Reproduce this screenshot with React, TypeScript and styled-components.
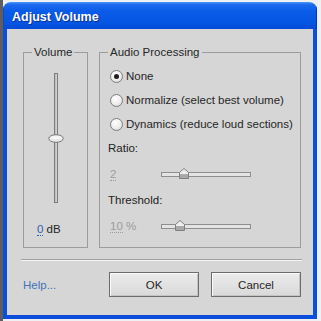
import React from "react";
import styled, { createGlobalStyle } from "styled-components";

const GlobalStyle = createGlobalStyle`
  html, body {
    margin: 0;
    padding: 0;
  }
  body {
    width: 321px;
    height: 321px;
    overflow: hidden;
    background: linear-gradient(to right, #5e5e5e 0 3px, #eef0f2 3px);
    font-family: "Liberation Sans", Arial, sans-serif;
    color: #262626;
  }
`;

const Page = styled.div`
  padding: 2px 0 0 3px;
`;

const Window = styled.div`
  width: 314px;
  height: 317px;
  display: flex;
  flex-direction: column;
  border-radius: 8px 8px 0 0;
  overflow: hidden;
`;

const TitleBar = styled.div`
  height: 27px;
  flex: none;
  box-sizing: border-box;
  padding: 3px 0 0 9px;
  display: flex;
  align-items: center;
  background: linear-gradient(
    to bottom,
    #4a95f7 0%,
    #1c69ef 10%,
    #0a5be8 35%,
    #0656e4 75%,
    #044bd6 100%
  );
  box-shadow: inset 1px 0 0 #1747c9, inset -1px 0 0 #0a34b8;
`;

const Title = styled.span`
  font-size: 12.5px;
  font-weight: bold;
  color: #fff;
  text-shadow: 1px 1px 0 #0b2f96;
`;

const Client = styled.div`
  flex: 1;
  box-sizing: border-box;
  background: #d6d6d6;
  border: 4px solid #0c4ddc;
  border-top: none;
  padding: 16px 12px 18px 16px;
  display: flex;
  flex-direction: column;
`;

const Groups = styled.div`
  display: flex;
  gap: 11px;
`;

const Group = styled.fieldset<{ $width: number }>`
  flex: none;
  width: ${(p) => p.$width}px;
  box-sizing: border-box;
  margin: 0;
  padding: 0;
  min-width: 0;
  border: 1px solid #9c9c9c;
  display: flex;
  flex-direction: column;
`;

const Legend = styled.legend`
  margin-left: 8px;
  padding: 0 2px;
  font-size: 11.5px;
  line-height: 14px;
  color: #262626;
`;

const VolumeBody = styled.div`
  padding-top: 14px;
  display: flex;
  flex-direction: column;
`;

const VTrackArea = styled.div`
  position: relative;
  width: 16px;
  height: 130px;
  margin: 0 auto;
  display: flex;
  justify-content: center;
`;

const VTrack = styled.div`
  width: 4px;
  height: 100%;
  box-sizing: border-box;
  border: 1px solid #7c7c7c;
  background: linear-gradient(to right, #b8b8b8, #d8d8d8);
`;

const VThumb = styled.svg<{ $top: number }>`
  position: absolute;
  left: 0;
  top: ${(p) => p.$top}px;
`;

const DbRow = styled.div`
  margin-top: 19px;
  padding-left: 13px;
  font-size: 11.5px;
  line-height: 14px;
`;

const Editable = styled.span<{ $disabled?: boolean }>`
  color: ${(p) => (p.$disabled ? "#9c9c9c" : "#2c62b4")};
  border-bottom: 1px dotted ${(p) => (p.$disabled ? "#9c9c9c" : "#2c62b4")};
`;

const Unit = styled.span<{ $disabled?: boolean }>`
  color: ${(p) => (p.$disabled ? "#9c9c9c" : "#262626")};
`;

const Options = styled.div`
  padding: 5px 0 0 10px;
`;

const RadioRow = styled.label`
  height: 24px;
  display: flex;
  align-items: center;
  gap: 3px;
  font-size: 11.5px;
`;

const RadioDot = styled.span<{ $checked?: boolean }>`
  position: relative;
  width: 13px;
  height: 13px;
  box-sizing: border-box;
  border-radius: 50%;
  border: 1px solid #7f7f7f;
  background: radial-gradient(circle at 40% 35%, #ffffff 0%, #ececec 55%, #cfcfcf 100%);

  &::after {
    content: "";
    display: ${(p) => (p.$checked ? "block" : "none")};
    position: absolute;
    left: 3px;
    top: 3px;
    width: 5px;
    height: 5px;
    border-radius: 50%;
    background: #1f1f1f;
  }
`;

const Params = styled.div`
  padding: 0 0 7px 8px;
`;

const ParamLabel = styled.div`
  height: 24px;
  display: flex;
  align-items: center;
  font-size: 11.5px;
  color: #222;
`;

const SliderRow = styled.div`
  height: 28px;
  display: flex;
  align-items: center;
  font-size: 11.5px;
`;

const ValueBox = styled.div`
  width: 53px;
  padding-left: 2px;
  box-sizing: border-box;
  line-height: 13px;
`;

const HTrack = styled.div`
  position: relative;
  width: 90px;
  height: 5px;
  box-sizing: border-box;
  border: 1px solid #8e8e8e;
  background: #e4e4e4;
`;

const HThumb = styled.svg<{ $left: number }>`
  position: absolute;
  top: -5px;
  left: ${(p) => p.$left}px;
`;

const Separator = styled.div`
  margin: 11px -1px 0 -2px;
  border-top: 1px solid #a2a2a2;
  border-bottom: 1px solid #f4f4f4;
`;

const Footer = styled.div`
  margin-top: 11px;
  display: flex;
  align-items: center;
`;

const HelpLink = styled.a`
  font-size: 11.5px;
  color: #3f74b6;
  text-decoration: none;
`;

const Buttons = styled.div`
  margin-left: auto;
  display: flex;
  gap: 12px;
`;

const Button = styled.button`
  width: 90px;
  height: 25px;
  box-sizing: border-box;
  border: 1px solid #6c6c6c;
  background: linear-gradient(to bottom, #ececec, #d9d9d9);
  box-shadow: inset 1px 1px 0 #fafafa, inset -1px -1px 0 #c4c4c4;
  font-family: "Liberation Sans", Arial, sans-serif;
  font-size: 11.5px;
  color: #262626;
  padding: 0;
`;

const VolumeThumb: React.FC<{ top: number }> = ({ top }) => (
  <VThumb $top={top} width="16" height="9" viewBox="0 0 16 9">
    <ellipse cx="8" cy="4.5" rx="7.3" ry="3.8" fill="#e9e9e9" stroke="#7a7a7a" />
    <ellipse cx="8" cy="3.6" rx="5" ry="1.6" fill="#f8f8f8" />
  </VThumb>
);

const SlideThumb: React.FC<{ left: number }> = ({ left }) => (
  <HThumb $left={left} width="10" height="11" viewBox="0 0 10 11">
    <path d="M0.5 10.5 V4.5 L5 0.5 L9.5 4.5 V10.5 Z" fill="#eeeeee" stroke="#7f7f7f" />
    <rect x="1" y="6" width="8" height="4" fill="#a9a9a9" />
  </HThumb>
);

const options = [
  { label: "None", checked: true },
  { label: "Normalize (select best volume)" },
  { label: "Dynamics (reduce loud sections)" },
];

const params = [
  { label: "Ratio:", value: "2", unit: "", thumb: 17 },
  { label: "Threshold:", value: "10", unit: " %", thumb: 13 },
];

export default function App() {
  return (
    <>
      <GlobalStyle />
      <Page>
        <Window>
          <TitleBar>
            <Title>Adjust Volume</Title>
          </TitleBar>
          <Client>
            <Groups>
              <Group $width={65}>
                <Legend>Volume</Legend>
                <VolumeBody>
                  <VTrackArea>
                    <VTrack />
                    <VolumeThumb top={61} />
                  </VTrackArea>
                  <DbRow>
                    <Editable>0</Editable> dB
                  </DbRow>
                </VolumeBody>
              </Group>
              <Group $width={202}>
                <Legend>Audio Processing</Legend>
                <Options>
                  {options.map((o) => (
                    <RadioRow key={o.label}>
                      <RadioDot $checked={o.checked} />
                      {o.label}
                    </RadioRow>
                  ))}
                </Options>
                <Params>
                  {params.map((p) => (
                    <React.Fragment key={p.label}>
                      <ParamLabel>{p.label}</ParamLabel>
                      <SliderRow>
                        <ValueBox>
                          <Editable $disabled>{p.value}</Editable>
                          <Unit $disabled>{p.unit}</Unit>
                        </ValueBox>
                        <HTrack>
                          <SlideThumb left={p.thumb} />
                        </HTrack>
                      </SliderRow>
                    </React.Fragment>
                  ))}
                </Params>
              </Group>
            </Groups>
            <Separator />
            <Footer>
              <HelpLink href="#">Help...</HelpLink>
              <Buttons>
                <Button>OK</Button>
                <Button>Cancel</Button>
              </Buttons>
            </Footer>
          </Client>
        </Window>
      </Page>
    </>
  );
}
